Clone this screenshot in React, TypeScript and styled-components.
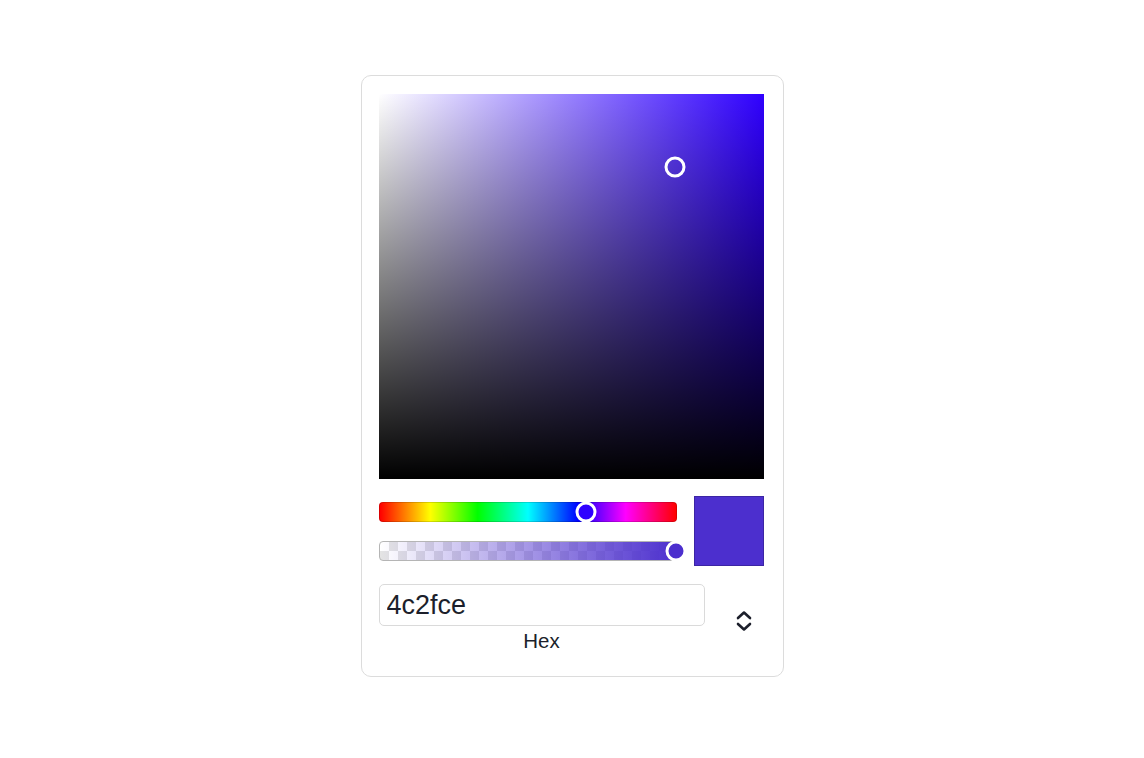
import React from 'react';
import styled, { createGlobalStyle } from 'styled-components';

const GlobalStyle = createGlobalStyle`
  body {
    margin: 0;
    background: #ffffff;
    font-family: "Liberation Sans", Arial, sans-serif;
  }
`;

const Page = styled.div`
  display: flex;
  justify-content: center;
  padding-top: 75px;
`;

const Card = styled.div`
  width: 386px;
  padding: 18px 18px 23px 17px;
  border: 1px solid #dcdcdc;
  border-radius: 10px;
  background: #fff;
`;

const Saturation = styled.div<{ $hue: string }>`
  position: relative;
  width: 385px;
  height: 385px;
  background: linear-gradient(to top, #000, rgba(0, 0, 0, 0)),
    linear-gradient(to right, #fff, ${(p) => p.$hue});
`;

const Thumb = styled.div<{ $fill?: string }>`
  position: absolute;
  width: 21px;
  height: 21px;
  box-sizing: border-box;
  border-radius: 50%;
  border: 3px solid #fff;
  background: ${(p) => p.$fill || 'transparent'};
  transform: translate(-50%, -50%);
`;

const ControlRow = styled.div`
  display: flex;
  align-items: center;
  gap: 17px;
  margin-top: 17px;
`;

const Bars = styled.div`
  display: flex;
  flex-direction: column;
  gap: 19px;
  width: 298px;
`;

const Bar = styled.div`
  position: relative;
  height: 20px;
  box-sizing: border-box;
  border-radius: 4px;
`;

const HueBar = styled(Bar)`
  border: 1px solid rgba(0, 0, 0, 0.15);
  background: linear-gradient(
    to right,
    #ff0000 0%,
    #ffff00 17%,
    #00ff00 33%,
    #00ffff 50%,
    #0000ff 67%,
    #ff00ff 83%,
    #ff0000 100%
  );
`;

const AlphaBar = styled(Bar)<{ $color: string }>`
  border: 1px solid #b5b5b5;
  background: linear-gradient(to right, rgba(76, 47, 206, 0), ${(p) => p.$color}),
    conic-gradient(#e4e4e4 25%, #ffffff 0 50%, #e4e4e4 0 75%, #ffffff 0) 0 0 / 18px 18px;
`;

const Swatch = styled.div<{ $color: string }>`
  width: 70px;
  height: 70px;
  box-sizing: border-box;
  border: 1px solid rgba(0, 0, 0, 0.2);
  background: ${(p) => p.$color};
`;

const FieldRow = styled.div`
  display: flex;
  align-items: center;
  margin-top: 18px;
`;

const Field = styled.div`
  display: flex;
  flex-direction: column;
  align-items: center;
  flex: 0 0 326px;
`;

const HexInput = styled.input`
  width: 100%;
  height: 42px;
  box-sizing: border-box;
  padding: 0 7px;
  border: 1px solid #dadada;
  border-radius: 5px;
  font-family: "Liberation Sans", Arial, sans-serif;
  font-size: 27px;
  color: #1c1f2b;
  outline: none;
`;

const Label = styled.span`
  margin-top: 3px;
  font-size: 20.5px;
  color: #1c1f2b;
  line-height: 24px;
`;

const Toggle = styled.button`
  display: flex;
  align-items: center;
  justify-content: center;
  flex: 1;
  padding: 0 0 0 18px;
  margin-top: 4px;
  background: none;
  border: none;
  color: #1c1f2b;
`;

const App = () => {
  const hex = '#4c2fce';
  const hue = '#2f00ff';
  const sat = 0.77;
  const val = 0.81;
  const huePos = 251 / 360;

  return (
    <Page>
      <GlobalStyle />
      <Card>
        <Saturation $hue={hue}>
          <Thumb style={{ left: `${sat * 100}%`, top: `${(1 - val) * 100}%` }} />
        </Saturation>
        <ControlRow>
          <Bars>
            <HueBar>
              <Thumb $fill={hue} style={{ left: `${huePos * 100}%`, top: '50%' }} />
            </HueBar>
            <AlphaBar $color={hex}>
              <Thumb $fill={hex} style={{ left: '100%', top: '50%' }} />
            </AlphaBar>
          </Bars>
          <Swatch $color={hex} />
        </ControlRow>
        <FieldRow>
          <Field>
            <HexInput defaultValue="4c2fce" />
            <Label>Hex</Label>
          </Field>
          <Toggle>
            <svg width="18" height="22" viewBox="0 0 18 22" fill="none" stroke="currentColor" strokeWidth="2.6" strokeLinecap="round" strokeLinejoin="round">
              <path d="M3 8 L9 2.5 L15 8" />
              <path d="M3 14 L9 19.5 L15 14" />
            </svg>
          </Toggle>
        </FieldRow>
      </Card>
    </Page>
  );
};

export default App;
